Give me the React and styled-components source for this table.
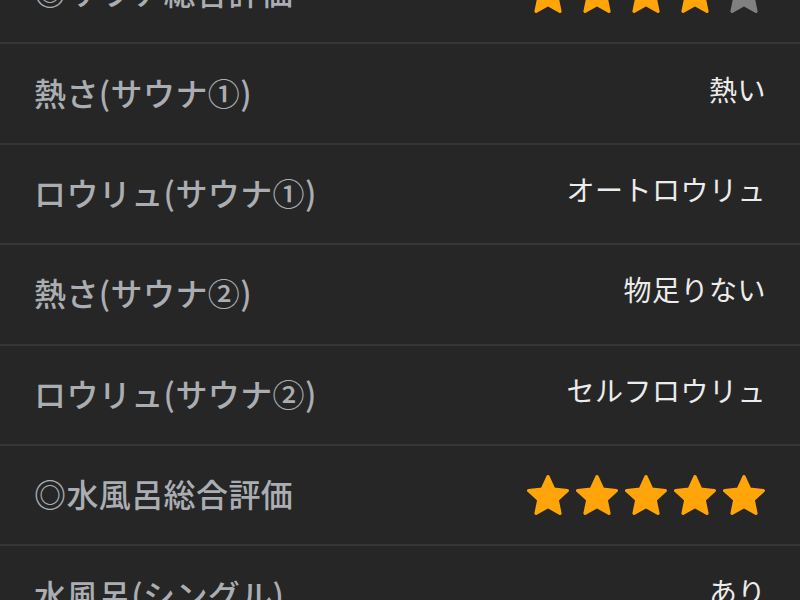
import React from "react";
import styled, { createGlobalStyle } from "styled-components";

const Global = createGlobalStyle`
  html, body { margin: 0; padding: 0; background: #262626; }
  body { font-family: "Noto Sans CJK JP", "Noto Sans", sans-serif; overflow: hidden; }
`;

const List = styled.div`
  margin-top: -56px;
  display: flex;
  flex-direction: column;
`;

const Row = styled.div`
  box-sizing: border-box;
  height: 100.4px;
  border-bottom: 2px solid #363636;
  display: flex;
  align-items: center;
  justify-content: space-between;
  padding: 0 34px;
`;

const Label = styled.span`
  font-size: 32px;
  font-weight: 500;
  color: #aaaeb3;
  letter-spacing: 0.4px;
  margin-bottom: 4px;
`;

const Value = styled.span`
  font-size: 28px;
  font-weight: 400;
  color: #ececec;
  letter-spacing: 0.5px;
  margin-bottom: 10px;
`;

const Stars = styled.div`
  display: flex;
  gap: 7px;
  margin-right: 1px;
`;

const StarSvg = styled.svg`
  width: 42px;
  height: 40px;
  display: block;
`;

const Star = ({ on }) => {
  const c = on ? "#ffa50a" : "#808080";
  return (
    <StarSvg viewBox="1.9 1.8 20.2 19.2">
      <path
        d="M12 2.6 L14.75 8.6 L21.3 9.3 L16.4 13.75 L17.75 20.2 L12 16.95 L6.25 20.2 L7.6 13.75 L2.7 9.3 L9.25 8.6 Z"
        fill={c}
        stroke={c}
        strokeWidth="1.6"
        strokeLinejoin="round"
      />
    </StarSvg>
  );
};

const Rating = ({ value }) => (
  <Stars>
    {[1, 2, 3, 4, 5].map((i) => (
      <Star key={i} on={i <= value} />
    ))}
  </Stars>
);

const rows = [
  { label: "◎サウナ総合評価", stars: 4 },
  { label: "熱さ(サウナ①)", value: "熱い" },
  { label: "ロウリュ(サウナ①)", value: "オートロウリュ" },
  { label: "熱さ(サウナ②)", value: "物足りない" },
  { label: "ロウリュ(サウナ②)", value: "セルフロウリュ" },
  { label: "◎水風呂総合評価", stars: 5 },
  { label: "水風呂(シングル)", value: "あり" },
];

export default function App() {
  return (
    <>
      <Global />
      <List>
        {rows.map((r, i) => (
          <Row key={i}>
            <Label>{r.label}</Label>
            {r.stars != null ? <Rating value={r.stars} /> : <Value>{r.value}</Value>}
          </Row>
        ))}
      </List>
    </>
  );
}
